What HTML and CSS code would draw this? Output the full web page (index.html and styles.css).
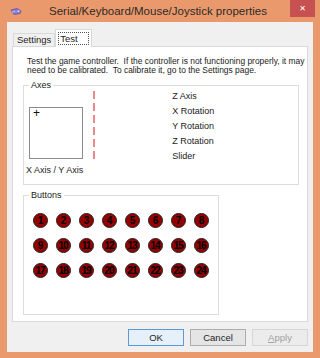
FILE: index.html
```html
<!DOCTYPE html>
<html lang="en">
<head>
  <meta charset="UTF-8" />
  <title>Serial/Keyboard/Mouse/Joystick properties</title>
  <link rel="stylesheet" href="styles.css">
</head>
<body>

  <div class="window">
    <div class="titlebar">
      <svg class="app-icon" width="12" height="9" viewBox="0 0 12 9">
        <path d="M1 3 L7 1.5 L11 4 L10 6.5 L4 7.5 Z" fill="#8a7fd0" stroke="#5a4fa8" stroke-width="0.8"/>
        <path d="M2 5 L5 4.5" stroke="#c9c2f0" stroke-width="1"/>
        <circle cx="8.5" cy="4.2" r="0.9" fill="#e6e2ff"/>
      </svg>
      <span class="title">Serial/Keyboard/Mouse/Joystick properties</span>
      <button class="close-btn">&#x2715;</button>
    </div>

    <div class="client">
      <div class="tabs">
        <span class="tab">Settings</span>
        <span class="tab active"><span class="focus">Test</span></span>
      </div>

      <div class="panel">
        <p class="intro">Test the game controller.&nbsp; If the controller is not functioning properly, it may need to be calibrated.&nbsp; To calibrate it, go to the Settings page.</p>

        <fieldset class="group axes">
          <legend>Axes</legend>
          <div class="axes-row">
            <div class="xy-col">
              <div class="xy-box"><span class="cross">+</span></div>
              <span class="xy-label">X Axis / Y Axis</span>
            </div>
            <div class="dash-col"></div>
            <ul class="axis-list">
              <li>Z Axis</li>
              <li>X Rotation</li>
              <li>Y Rotation</li>
              <li>Z Rotation</li>
              <li>Slider</li>
            </ul>
          </div>
        </fieldset>

        <fieldset class="group buttons">
          <legend>Buttons</legend>
          <div class="btn-grid">
            <span class="dot">1</span><span class="dot">2</span><span class="dot">3</span><span class="dot">4</span>
            <span class="dot">5</span><span class="dot">6</span><span class="dot">7</span><span class="dot">8</span>
            <span class="dot">9</span><span class="dot">10</span><span class="dot">11</span><span class="dot">12</span>
            <span class="dot">13</span><span class="dot">14</span><span class="dot">15</span><span class="dot">16</span>
            <span class="dot">17</span><span class="dot">18</span><span class="dot">19</span><span class="dot">20</span>
            <span class="dot">21</span><span class="dot">22</span><span class="dot">23</span><span class="dot">24</span>
          </div>
        </fieldset>
      </div>

      <div class="actions">
        <button class="dlg-btn default">OK</button>
        <button class="dlg-btn">Cancel</button>
        <button class="dlg-btn" disabled><u>A</u>pply</button>
      </div>
    </div>
  </div>

</body>
</html>
```

FILE: styles.css
```css
* {
  box-sizing: border-box;
}

body {
  margin: 0;
  font-family: "Liberation Sans", Arial, sans-serif;
  color: #1e1e1e;
}

/* Moldura da janela (Windows 8, laranja) */
.window {
  width: 320px;
  height: 358px;
  background-color: #ea996c;
  padding: 0 7px 6px 7px;
  display: flex;
  flex-direction: column;
}

.titlebar {
  height: 22px;
  display: flex;
  align-items: flex-start;
  flex-shrink: 0;
}

.app-icon {
  margin: 7px 0 0 3px;
}

.title {
  flex: 1;
  text-align: center;
  font-size: 11.5px;
  color: #2b2b2b;
  margin-top: 5px;
  margin-left: 4px;
}

.close-btn {
  width: 25px;
  height: 17px;
  margin-right: -2px;
  border: none;
  background-color: #c75050;
  color: #fff;
  font-size: 8px;
  font-weight: bold;
  padding: 0;
  font-family: "DejaVu Sans", sans-serif;
}

.client {
  flex: 1;
  background-color: #f0f0f0;
  display: flex;
  flex-direction: column;
  padding: 7px 5px 0 5px;
}

/* Abas */
.tabs {
  display: flex;
  align-items: flex-end;
  height: 17px;
  margin-left: 1px;
  position: relative;
  z-index: 1;
}

.tab {
  font-size: 9.5px;
  height: 13px;
  line-height: 12px;
  padding: 0 3px;
  border: 1px solid #d9d9d9;
  border-bottom: none;
  background-color: #f0f0f0;
}

.tab.active {
  height: 18px;
  margin-bottom: -1px;
  padding: 2px 2px 0 2px;
  background-color: #fff;
  line-height: 11px;
}

.tab .focus {
  display: inline-block;
  border: 1px dotted #555;
  padding: 0 10px 0 1px;
}

.panel {
  height: 276px;
  background-color: #fff;
  border: 1px solid #d9d9d9;
  padding: 0 8px 0 10px;
  font-size: 9px;
}

.intro {
  margin: 10px -6px 0 4px;
  line-height: 9px;
  font-size: 8.45px;
  color: #222;
}

/* Caixas de grupo */
.group {
  margin: 0;
  border: 1px solid #dcdcdc;
  padding: 0;
}

.group legend {
  padding: 0 2px;
  margin-left: 5px;
  font-size: 9px;
  line-height: 10px;
  color: #222;
}

.axes {
  margin-top: 5px;
  height: 105px;
}

.axes-row {
  display: flex;
}

.xy-col {
  display: flex;
  flex-direction: column;
  padding-left: 5px;
  padding-top: 17px;
}

.xy-box {
  width: 54px;
  height: 52px;
  border: 1px solid #8c8c8c;
  padding-left: 3px;
}

.cross {
  display: block;
  font-size: 12px;
  line-height: 10px;
  color: #111;
}

.xy-label {
  margin: 6px 0 0 -3px;
  font-size: 9px;
  color: #222;
}

.dash-col {
  width: 2px;
  height: 69px;
  margin: 1px 0 0 10px;
  background: repeating-linear-gradient(to bottom, #ef8787 0, #ef8787 8px, transparent 8px, transparent 12px);
}

.axis-list {
  list-style: none;
  margin: -1px 0 0 77px;
  padding: 0;
}

.axis-list li {
  height: 15px;
  line-height: 15px;
  font-size: 9px;
  color: #222;
}

.buttons {
  margin-top: 5px;
  width: 196px;
  height: 125px;
}

.btn-grid {
  display: grid;
  grid-template-columns: repeat(8, 15px);
  grid-auto-rows: 15px;
  column-gap: 8px;
  row-gap: 10px;
  padding: 13px 0 0 9px;
}

.dot {
  width: 15px;
  height: 15px;
  border-radius: 50%;
  background-color: #960000;
  border: 1px solid #222;
  color: #000;
  font-size: 10px;
  font-weight: bold;
  line-height: 13px;
  text-align: center;
  letter-spacing: -1px;
  text-indent: -1px;
}

/* Botões do diálogo */
.actions {
  display: flex;
  justify-content: flex-end;
  gap: 6px;
  padding-top: 7px;
}

.dlg-btn {
  width: 56px;
  height: 17px;
  padding: 0;
  font-family: "Liberation Sans", Arial, sans-serif;
  font-size: 9.5px;
  color: #1e1e1e;
  background-color: #e5e5e5;
  border: 1px solid #adadad;
}

.dlg-btn.default {
  border-color: #5b9bd5;
  background-color: #e5f0fa;
}

.dlg-btn:disabled {
  color: #a0a0a0;
  background-color: #ececec;
  border-color: #d6d6d6;
}
```
